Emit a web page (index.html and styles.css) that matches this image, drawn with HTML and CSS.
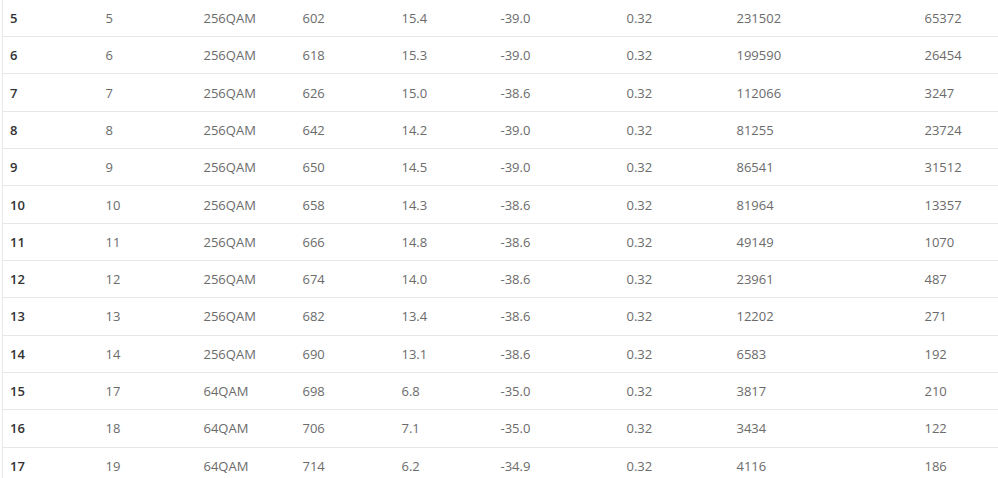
FILE: index.html
```html
<!DOCTYPE html>
<html>
<head>
<meta charset="utf-8">
<link rel="stylesheet" href="styles.css">
</head>
<body>
<table class="grid">
<colgroup>
<col class="c1"><col class="c2"><col class="c3"><col class="c4"><col class="c5"><col class="c6"><col class="c7"><col class="c8"><col class="c9">
</colgroup>
<tbody>
<tr><th>5</th><td>5</td><td>256QAM</td><td>602</td><td>15.4</td><td>-39.0</td><td>0.32</td><td>231502</td><td>65372</td></tr>
<tr><th>6</th><td>6</td><td>256QAM</td><td>618</td><td>15.3</td><td>-39.0</td><td>0.32</td><td>199590</td><td>26454</td></tr>
<tr><th>7</th><td>7</td><td>256QAM</td><td>626</td><td>15.0</td><td>-38.6</td><td>0.32</td><td>112066</td><td>3247</td></tr>
<tr><th>8</th><td>8</td><td>256QAM</td><td>642</td><td>14.2</td><td>-39.0</td><td>0.32</td><td>81255</td><td>23724</td></tr>
<tr><th>9</th><td>9</td><td>256QAM</td><td>650</td><td>14.5</td><td>-39.0</td><td>0.32</td><td>86541</td><td>31512</td></tr>
<tr><th>10</th><td>10</td><td>256QAM</td><td>658</td><td>14.3</td><td>-38.6</td><td>0.32</td><td>81964</td><td>13357</td></tr>
<tr><th>11</th><td>11</td><td>256QAM</td><td>666</td><td>14.8</td><td>-38.6</td><td>0.32</td><td>49149</td><td>1070</td></tr>
<tr><th>12</th><td>12</td><td>256QAM</td><td>674</td><td>14.0</td><td>-38.6</td><td>0.32</td><td>23961</td><td>487</td></tr>
<tr><th>13</th><td>13</td><td>256QAM</td><td>682</td><td>13.4</td><td>-38.6</td><td>0.32</td><td>12202</td><td>271</td></tr>
<tr><th>14</th><td>14</td><td>256QAM</td><td>690</td><td>13.1</td><td>-38.6</td><td>0.32</td><td>6583</td><td>192</td></tr>
<tr><th>15</th><td>17</td><td>64QAM</td><td>698</td><td>6.8</td><td>-35.0</td><td>0.32</td><td>3817</td><td>210</td></tr>
<tr><th>16</th><td>18</td><td>64QAM</td><td>706</td><td>7.1</td><td>-35.0</td><td>0.32</td><td>3434</td><td>122</td></tr>
<tr><th>17</th><td>19</td><td>64QAM</td><td>714</td><td>6.2</td><td>-34.9</td><td>0.32</td><td>4116</td><td>186</td></tr>
</tbody>
</table>
</body>
</html>
```

FILE: styles.css
```css
html, body {
  margin: 0;
  padding: 0;
  background: #fff;
}
body {
  font-family: "Open Sans", "Noto Sans", sans-serif;
  font-size: 13px;
  color: #6b6b6b;
  overflow: hidden;
}
.grid {
  border-collapse: collapse;
  table-layout: fixed;
  width: 996px;
  margin: -1.3px 0 0 2px;
  border-left: 1px solid #e8e8e8;
}
.c1 { width: 96px; }
.c2 { width: 98px; }
.c3 { width: 99px; }
.c4 { width: 99px; }
.c5 { width: 99px; }
.c6 { width: 126px; }
.c7 { width: 110px; }
.c8 { width: 188px; }
.c9 { width: 81px; }
.grid th, .grid td {
  height: 36.33px;
  padding: 0 0 0 7px;
  border-top: 1px solid #e6e6e6;
  text-align: left;
  vertical-align: middle;
  white-space: nowrap;
  font-weight: 400;
}
.grid th {
  font-weight: 600;
  color: #333;
}
```
